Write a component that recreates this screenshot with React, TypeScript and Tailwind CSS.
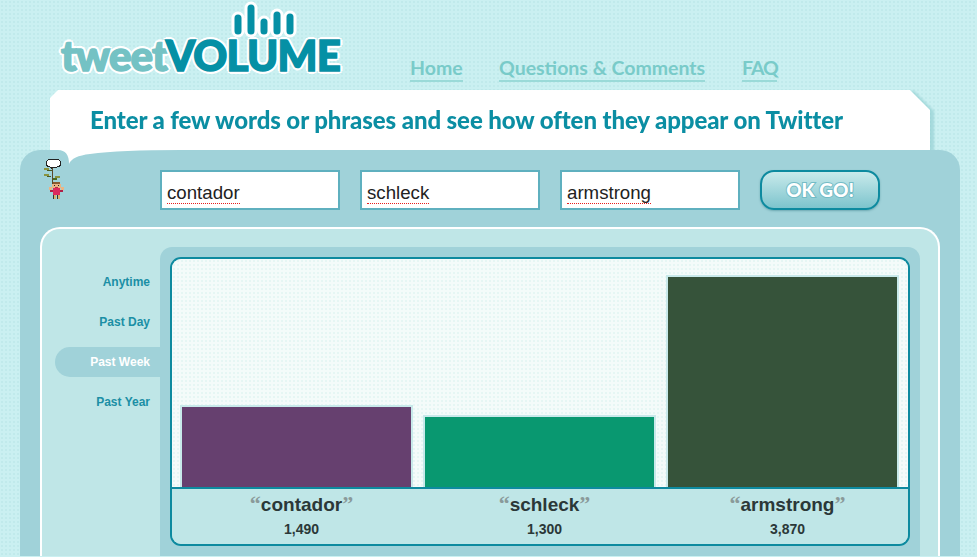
const Mascot = () => (
  <svg width="22" height="44" viewBox="0 0 22 44" shapeRendering="crispEdges" className="absolute left-[24px] top-[8px]">
    <rect x="2.5" y="1.5" width="14" height="7.5" rx="3.5" fill="#fff" stroke="#222" strokeWidth="1" />
    <rect x="7" y="9" width="2" height="2" fill="#222" />
    <rect x="8" y="10" width="1" height="16" fill="#5a4a2a" />
    <rect x="0" y="10" width="5" height="2" fill="#8a9440" />
    <rect x="3" y="12" width="5" height="1" fill="#4a5a20" />
    <rect x="0" y="16" width="5" height="2" fill="#8a9440" />
    <rect x="3" y="18" width="4" height="1" fill="#4a5a20" />
    <rect x="11" y="18" width="5" height="2" fill="#8a9440" />
    <rect x="9" y="20" width="4" height="2" fill="#4a6a20" />
    <rect x="9" y="24" width="7" height="2" fill="#8a5a30" />
    <rect x="8" y="26" width="9" height="4" fill="#eab585" />
    <rect x="10" y="27" width="1" height="1" fill="#222" />
    <rect x="14" y="27" width="1" height="1" fill="#222" />
    <rect x="11" y="29" width="3" height="1" fill="#c03040" />
    <rect x="5" y="29" width="3" height="3" fill="#eab585" />
    <rect x="17" y="29" width="3" height="3" fill="#eab585" />
    <rect x="6" y="32" width="3" height="2" fill="#b02048" />
    <rect x="16" y="32" width="3" height="2" fill="#b02048" />
    <rect x="9" y="30" width="7" height="7" fill="#dc2a5e" />
    <rect x="9" y="37" width="3" height="4" fill="#d8b070" />
    <rect x="13" y="37" width="3" height="4" fill="#d8b070" />
    <rect x="9" y="37" width="1" height="4" fill="#333" />
    <rect x="13" y="37" width="1" height="4" fill="#333" />
  </svg>
);

const LogoBars = () => (
  <svg width="74" height="40" viewBox="0 0 74 40" className="absolute left-[171px] top-[0px]" fill="none" strokeLinecap="round">
    <g stroke="#ffffff" strokeWidth="13">
      <path d="M7 18V31M20 8V31M33 22V31M46 15V31M59 17V31" />
    </g>
    <g stroke="#0590a5" strokeWidth="7">
      <path d="M7 18V31M20 8V31M33 22V31M46 15V31M59 17V31" />
    </g>
  </svg>
);

const terms = [
  { word: "contador", count: "1,490", color: "bg-[#66406f]", height: "h-[82px]" },
  { word: "schleck", count: "1,300", color: "bg-[#099870]", height: "h-[72px]" },
  { word: "armstrong", count: "3,870", color: "bg-[#36533a]", height: "h-[212px]" },
];

const ranges = ["Anytime", "Past Day", "Past Week", "Past Year"];

export default function App() {
  return (
    <div className="h-[557px] w-[977px] overflow-hidden bg-[#caf0f1] bg-[radial-gradient(#c0eaeb_0.9px,transparent_1px)] bg-[length:4px_4px] font-['Liberation_Sans',sans-serif]">
      <header className="flex h-[90px]">
        <div className="relative ml-[60px] h-[90px] w-[350px]">
          <LogoBars />
          <div className="absolute left-[1px] top-[29px] font-['Lato',sans-serif] text-[42px] leading-[52px] font-black tracking-[-0.8px] whitespace-nowrap [text-shadow:3px_0_0_#fff,-3px_0_0_#fff,0_3px_0_#fff,0_-3px_0_#fff,2px_2px_0_#fff,-2px_2px_0_#fff,2px_-2px_0_#fff,-2px_-2px_0_#fff]">
            <span className="text-[#74c2c4] [-webkit-text-stroke:1.5px_#74c2c4]">tweet</span>
            <span className="text-[#0590a5] [-webkit-text-stroke:1.5px_#0590a5]">VOLUME</span>
          </div>
        </div>
        <nav className="flex items-start pt-[55px] font-['Lato',sans-serif] text-[19.5px] leading-[25px] font-bold text-[#79cbc9]">
          <a className="w-[53px] border-b-2 border-[#9adad8]">Home</a>
          <a className="ml-[36px] w-[206px] whitespace-nowrap border-b-2 border-[#9adad8]">Questions &amp; Comments</a>
          <a className="ml-[37px] w-[35px] whitespace-nowrap border-b-2 border-[#9adad8] tracking-[-1px]">FAQ</a>
        </nav>
      </header>

      <div className="ml-[50px] w-[880px] drop-shadow-[4px_1px_1px_rgba(120,190,195,0.45)]">
        <div className="flex h-[60px] items-center pl-[40px] [clip-path:polygon(8px_0,860px_0,880px_20px,880px_100%,0_100%,0_8px)] bg-white font-['Lato',sans-serif] text-[24px] font-black tracking-[-0.1px] whitespace-nowrap text-[#0b8ea3]">
          Enter a few words or phrases and see how often they appear on Twitter
        </div>
      </div>

      <main className="relative ml-[20px] w-[940px] rounded-t-[20px] bg-[#a0d2d9] pt-[20px]">
        <svg width="130" height="16" viewBox="0 0 130 16" className="absolute left-[30px] top-0">
          <path d="M8 0Q19 0 19 14Q22 6 40 4Q70 0 130 0Z" fill="#fff" />
        </svg>
        <Mascot />

        <form className="flex items-center gap-[20px] pl-[140px]">
          {["contador", "schleck", "armstrong"].map((v) => (
            <div
              key={v}
              className="flex h-[40px] w-[180px] items-center border-2 border-[#5fb0bf] bg-white pl-[5px] pt-[5px] text-[18.67px] text-[#222]"
            >
              <span className="border-b border-dotted border-[#e81c1c] leading-[21px]">{v}</span>
            </div>
          ))}
          <button
            type="button"
            className="h-[40px] w-[120px] rounded-[14px] border-2 border-[#0d8a9f] bg-gradient-to-b from-[#c8eaeb] to-[#7cc4cd] font-['Lato',sans-serif] text-[19px] font-black text-white shadow-[0_1px_2px_rgba(60,130,140,0.5)] [paint-order:stroke_fill] [-webkit-text-stroke:2px_#74bcc6]"
          >
            OK GO!
          </button>
        </form>

        <section className="ml-[20px] mt-[17px] flex w-[900px] rounded-t-[20px] border-2 border-b-0 border-white bg-[#bfe6e7] pl-[13px] pr-[18px] pt-[18px]">
          <ul className="flex w-[105px] shrink-0 flex-col gap-[10px] pt-[20px]">
            {ranges.map((r) => (
              <li
                key={r}
                className={
                  r === "Past Week"
                    ? "flex h-[30px] items-center justify-end rounded-l-full bg-[#a0d2d9] pr-[10px] text-[12px] font-bold text-white"
                    : "flex h-[30px] items-center justify-end pr-[10px] text-[12px] font-bold text-[#1b8fa5]"
                }
              >
                {r}
              </li>
            ))}
          </ul>

          <div className="h-[309px] flex-1 rounded-t-[12px] bg-[#a0d2d9] p-[10px]">
            <div className="flex h-[289px] flex-col overflow-hidden rounded-[11px] border-2 border-[#0d8a9f]">
              <div className="flex h-[230px] items-end gap-[10px] border-b-2 border-[#0d8a9f] bg-[#f4fbfa] bg-[radial-gradient(#e6f6f4_0.9px,transparent_1px)] bg-[length:4px_4px] pl-[8px] pr-[9px]">
                {terms.map((t) => (
                  <div key={t.word} className={`${t.height} ${t.color} w-[233px] border-2 border-b-0 border-[#c8e9ea]`} />
                ))}
              </div>
              <div className="flex flex-1 gap-[10px] bg-[#bfe6e7] pl-[8px] pr-[9px] pt-[3px] text-center font-bold text-[#2b3838]">
                {terms.map((t) => (
                  <div key={t.word} className="w-[233px] pl-[10px]">
                    <div className="text-[19px] leading-[26px]">
                      <span className="font-['Liberation_Serif',serif] text-[22px] leading-[20px] text-[#8a9a9a]">“</span>
                      {t.word}
                      <span className="font-['Liberation_Serif',serif] text-[22px] leading-[20px] text-[#8a9a9a]">”</span>
                    </div>
                    <div className="mt-[1px] text-[14px] leading-[20px]">{t.count}</div>
                  </div>
                ))}
              </div>
            </div>
          </div>
        </section>
      </main>
    </div>
  );
}
